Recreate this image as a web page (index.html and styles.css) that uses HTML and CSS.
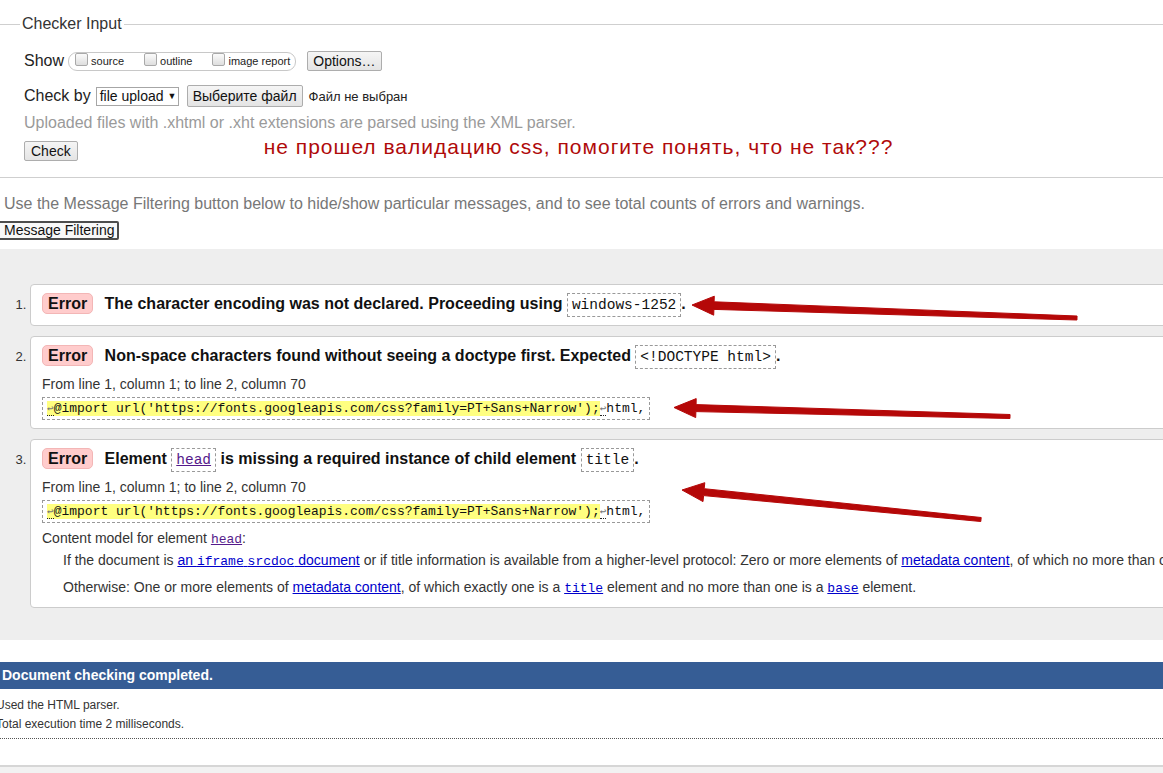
FILE: index.html
```html
<!DOCTYPE html>
<html lang="en">
<head>
<meta charset="utf-8">
<title>Nu Html Checker</title>
<link rel="stylesheet" href="styles.css">
</head>
<body>
<form class="checker">
  <fieldset class="input-set">
    <legend class="legend">Checker Input</legend>
    <div class="row row-show">
      <span class="row-label">Show</span>
      <span class="show-group">
        <span class="opt"><span class="cb"></span>source</span>
        <span class="opt"><span class="cb"></span>outline</span>
        <span class="opt"><span class="cb"></span>image report</span>
      </span>
      <span class="btn btn-options">Options…</span>
    </div>
    <div class="row row-by">
      <span class="row-label">Check by</span>
      <span class="select-box">file upload <span class="caret">▼</span></span>
      <span class="btn btn-file">Выберите файл</span>
      <span class="file-status">Файл не выбран</span>
    </div>
    <p class="note">Uploaded files with .xhtml or .xht extensions are parsed using the XML parser.</p>
    <div class="row row-check">
      <span class="btn btn-check">Check</span>
      <span class="annotation">не прошел валидацию css, помогите понять, что не так???</span>
    </div>
  </fieldset>
</form>

<p class="filter-note">Use the Message Filtering button below to hide/show particular messages, and to see total counts of errors and warnings.</p>
<div class="filter-row"><span class="btn btn-filter">Message Filtering</span></div>

<div class="results">
  <ol class="messages">
    <li class="msg">
      <p class="msg-line"><span class="badge">Error</span> The character encoding was not declared. Proceeding using <code class="code">windows-1252</code>.</p>
    </li>
    <li class="msg">
      <p class="msg-line"><span class="badge">Error</span> Non-space characters found without seeing a doctype first. Expected <code class="code">&lt;!DOCTYPE html&gt;</code>.</p>
      <p class="loc">From line 1, column 1; to line 2, column 70</p>
      <code class="extract"><mark class="hl"><span class="lf">↩</span>@import url('https://fonts.googleapis.com/css?family=PT+Sans+Narrow');</mark><span class="lf">↩</span>html,</code>
    </li>
    <li class="msg">
      <p class="msg-line"><span class="badge">Error</span> Element <code class="code"><a class="visited" href="#head">head</a></code> is missing a required instance of child element <code class="code">title</code>.</p>
      <p class="loc">From line 1, column 1; to line 2, column 70</p>
      <code class="extract"><mark class="hl"><span class="lf">↩</span>@import url('https://fonts.googleapis.com/css?family=PT+Sans+Narrow');</mark><span class="lf">↩</span>html,</code>
      <p class="model">Content model for element <a class="visited mono" href="#head">head</a>:</p>
      <p class="model-p">If the document is <a class="link" href="#srcdoc">an <span class="mono">iframe</span> <span class="mono">srcdoc</span> document</a> or if title information is available from a higher-level protocol: Zero or more elements of <a class="link" href="#meta">metadata content</a>, of which no more than one is a <a class="link mono" href="#title">title</a> element and no more than one is a <a class="link mono" href="#base">base</a> element.</p>
      <p class="model-p model-p2">Otherwise: One or more elements of <a class="link" href="#meta">metadata content</a>, of which exactly one is a <a class="link mono" href="#title">title</a> element and no more than one is a <a class="link mono" href="#base">base</a> element.</p>
    </li>
  </ol>
</div>

<div class="done">Document checking completed.</div>
<div class="stats">
  <p class="stat">Used the HTML parser.</p>
  <p class="stat">Total execution time 2 milliseconds.</p>
</div>

<div class="footer">
  <span class="foot-cell foot-first"></span>
  <span class="foot-cell"></span>
  <span class="foot-cell"></span>
  <span class="foot-cell"></span>
  <span class="foot-cell"></span>
</div>

<svg class="arrows" width="1163" height="773" viewBox="0 0 1163 773" aria-hidden="true">
  <polygon points="692,305 714.3,296.2 714.1,301.8 1077.05,316 1076.95,320 713.9,309.4 713.7,315.2"/>
  <polygon points="674,407.5 696.2,398.6 696.1,404.6 1010.05,414.5 1009.95,418.5 695.9,411.6 695.7,417.6"/>
  <polygon points="682,490 704.8,482.7 704.2,488.7 981.2,517.5 980.8,521.5 703.6,495.6 703.0,501.6"/>
</svg>
</body>
</html>
```

FILE: styles.css
```css
html {
  overflow: hidden;
}

body {
  margin: 0;
  position: relative;
  width: 1163px;
  height: 773px;
  overflow: hidden;
  font-family: "Liberation Sans", Arial, sans-serif;
  color: #222;
  background: #fff;
}

.checker {
  margin: 0;
}

.input-set {
  margin: 15px 0 0;
  padding: 0 0 14px 20px;
  border: 1px solid #cfcfcf;
  border-width: 1px 0;
  min-width: 0;
}

.legend {
  padding: 0 2px;
  font-size: 16px;
  line-height: 18px;
  color: #333;
}

.row {
  display: flex;
  align-items: center;
  height: 26px;
  padding-left: 4px;
}

.row-show {
  margin-top: 15px;
}

.row-by {
  margin-top: 9px;
}

.row-label {
  font-size: 16px;
  color: #222;
}

.show-group {
  display: inline-flex;
  align-items: center;
  height: 17px;
  margin-left: 4px;
  padding: 0 5px 0 6px;
  border: 1px solid #c8c8c8;
  border-radius: 9px;
}

.opt {
  display: inline-flex;
  align-items: center;
  margin-right: 20px;
  font-size: 11px;
  color: #222;
}

.opt:last-child {
  margin-right: 0;
}

.cb {
  width: 13px;
  height: 13px;
  box-sizing: border-box;
  margin: 0 3px 4px 0;
  border: 1px solid #a9a9a9;
  border-radius: 2px;
  background: linear-gradient(#fbfbfb, #dedede);
}

.btn {
  display: inline-block;
  padding: 0 5px;
  font-size: 14px;
  line-height: 18px;
  color: #111;
  border: 1px solid #adadad;
  border-radius: 2px;
  background: linear-gradient(#f5f5f5, #e4e4e4);
  white-space: nowrap;
}

.btn-options {
  margin-left: 11px;
}

.select-box {
  display: inline-block;
  box-sizing: border-box;
  width: 83px;
  height: 19px;
  margin-left: 5px;
  padding-left: 3px;
  font-size: 14px;
  line-height: 17px;
  color: #111;
  border: 1px solid #a6a6a6;
  background: #fff;
}

.caret {
  font-size: 9px;
  vertical-align: 2px;
}

.btn-file {
  margin-left: 8px;
  padding: 1px 5px;
}

.file-status {
  margin-left: 6px;
  font-size: 13px;
  color: #222;
}

.note {
  margin: 4px 0 0;
  padding-left: 4px;
  font-size: 16px;
  line-height: 20px;
  color: #9a9a9a;
}

.row-check {
  height: 24px;
  margin-top: 6px;
}

.btn-check {
  padding: 0 6px;
}

.annotation {
  margin: 0 0 8px 186px;
  font-size: 21px;
  line-height: 24px;
  letter-spacing: 1px;
  color: #b00a0a;
}

.filter-note {
  margin: 16px 0 0 4px;
  font-size: 16px;
  line-height: 20px;
  color: #777;
}

.filter-row {
  display: flex;
  margin-top: 7px;
}

.btn-filter {
  margin-left: -3px;
  padding: 0 2px 0 5px;
  line-height: 15px;
  border: 2px solid #4d4d4d;
  border-radius: 2px;
  background: #f8f8f8;
}

.results {
  margin-top: 9px;
  padding: 35px 0 32px 30px;
  background: #eeeeee;
}

.messages {
  margin: 0;
  padding: 0;
  list-style: decimal outside;
}

.msg {
  width: 1160px;
  box-sizing: border-box;
  margin-bottom: 10px;
  padding: 6px 11px 8px;
  font-size: 13px;
  color: #333;
  background: #fff;
  border: 1px solid #cccccc;
  border-radius: 4px;
}

.msg:last-child {
  margin-bottom: 0;
  padding-bottom: 10px;
}

.msg::marker {
  font-size: 13px;
  color: #333;
}

.msg-line {
  margin: 0;
  font-size: 16px;
  font-weight: bold;
  line-height: 26px;
  color: #111;
}

.badge {
  display: inline-block;
  margin-right: 7px;
  padding: 0 5px;
  line-height: 19px;
  background: #ffcccc;
  border: 1px solid #f3b6b6;
  border-radius: 5px;
}

.code {
  display: inline-block;
  padding: 0 4px;
  font-family: "Liberation Mono", "DejaVu Sans Mono", monospace;
  font-size: 14.5px;
  font-weight: normal;
  line-height: 22px;
  color: #111;
  border: 1px dashed #999;
}

.visited {
  color: #551a8b;
}

.loc {
  margin: 5px 0 0;
  font-size: 14px;
  line-height: 20px;
  color: #333;
}

.extract {
  display: inline-block;
  margin-top: 3px;
  padding: 0 4px;
  font-family: "Liberation Mono", "DejaVu Sans Mono", monospace;
  font-size: 13px;
  line-height: 21px;
  color: #111;
  border: 1px dashed #999;
}

.hl {
  background: #ffff80;
  color: #111;
}

.lf {
  font-family: "DejaVu Sans Mono", monospace;
  font-size: 11px;
  color: #777;
  border-bottom: 1px dotted #222;
}

.model {
  margin: 5px 0 0;
  font-size: 14px;
  line-height: 20px;
  color: #333;
}

.model-p {
  margin: 2px 0 0 21px;
  font-size: 14px;
  line-height: 20px;
  color: #333;
  white-space: nowrap;
}

.model-p2 {
  margin-top: 7px;
}

.mono {
  font-family: "Liberation Mono", "DejaVu Sans Mono", monospace;
  font-size: 13px;
  line-height: 14px;
}

.link {
  color: #0000cc;
}

.done {
  margin-top: 22px;
  padding-left: 2px;
  font-size: 14px;
  font-weight: bold;
  line-height: 27px;
  color: #fff;
  background: #365d95;
}

.stats {
  margin-left: -4px;
  padding: 7px 0 4px;
  border-bottom: 1px dotted #555;
}

.stat {
  margin: 0;
  font-size: 12px;
  line-height: 19px;
  color: #333;
}

.footer {
  display: flex;
  height: 20px;
  margin-top: 26px;
  padding-top: 6px;
  background: #f2f2f2;
  border-top: 2px solid #d6d6d6;
}

.foot-cell {
  width: 227px;
  flex: none;
  border-left: 1px solid #b5b5b5;
}

.foot-first {
  width: 166px;
  border-left: none;
}

.arrows {
  position: absolute;
  top: 0;
  left: 0;
  pointer-events: none;
}

.arrows polygon {
  fill: #b50808;
  stroke: #b50808;
  stroke-width: 1;
  stroke-linejoin: round;
}
```
